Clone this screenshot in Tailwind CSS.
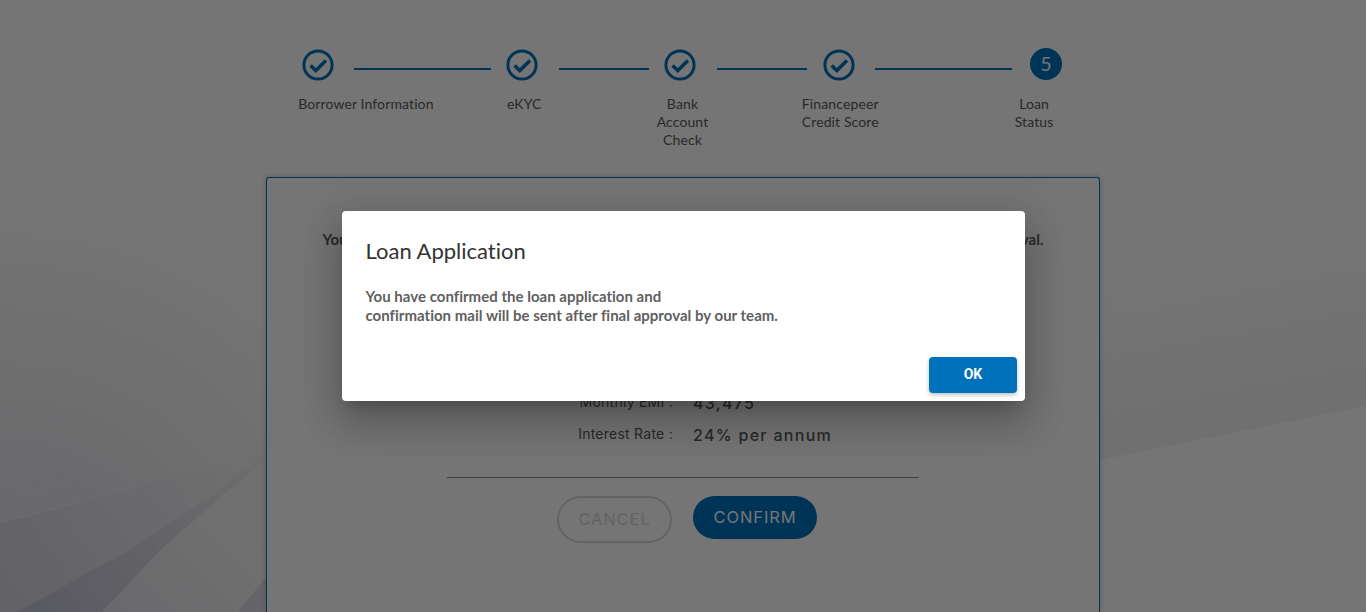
<!DOCTYPE html>
<html lang="en">
<head>
<meta charset="utf-8">
<title>Loan Status</title>
<script src="https://cdn.jsdelivr.net/npm/@tailwindcss/browser@4"></script>
</head>
<body class="relative h-[612px] w-[1366px] overflow-hidden bg-white font-['Lato',sans-serif] text-[#5a5a5a] [font-variant-ligatures:none]">
<svg class="absolute inset-0" width="1366" height="612" viewBox="0 0 1366 612" aria-hidden="true">
  <defs>
    <radialGradient id="haze" gradientUnits="userSpaceOnUse" cx="0" cy="640" r="440">
      <stop offset="0" stop-color="#dcd9e2"/><stop offset=".4" stop-color="#e8e6eb"/><stop offset=".6" stop-color="#f1f0f2"/><stop offset=".85" stop-color="#f9f9f9"/><stop offset="1" stop-color="#fff"/>
    </radialGradient>
    <linearGradient id="plane" gradientUnits="userSpaceOnUse" x1="0" y1="612" x2="220" y2="450"><stop offset="0" stop-color="#d6d4df"/><stop offset=".6" stop-color="#e5e3e9"/><stop offset="1" stop-color="#f1f1f2"/></linearGradient>
    <linearGradient id="ray" gradientUnits="userSpaceOnUse" x1="50" y1="612" x2="266" y2="450"><stop offset="0" stop-color="#c5c5d6"/><stop offset=".5" stop-color="#dad8e0"/><stop offset="1" stop-color="#f1f1f2"/></linearGradient>
    <linearGradient id="low" gradientUnits="userSpaceOnUse" x1="130" y1="612" x2="240" y2="500"><stop offset="0" stop-color="#e8e7ec"/><stop offset="1" stop-color="#f5f5f5"/></linearGradient>
    <linearGradient id="right" gradientUnits="userSpaceOnUse" x1="1200" y1="250" x2="1235" y2="430"><stop offset="0" stop-color="#fff"/><stop offset="1" stop-color="#f3f3f4"/></linearGradient>
  </defs>
  <rect width="450" height="612" fill="url(#haze)"/>
  <g stroke="#f2f1f4" stroke-width="1" fill="none" opacity=".5">
    <path d="M0 440Q12 426 20 412M0 452Q24 430 38 410M0 464Q34 438 56 420M0 473Q44 448 76 430M0 482Q52 458 98 440M0 490Q60 468 120 450M0 500Q70 480 140 462"/>
  </g>
  <path d="M0 523L125 491L210 466L266 452V612H0Z" fill="url(#plane)"/>
  <path d="M0 522L30 515L90 500" stroke="#efedf1" stroke-width="1.2" fill="none"/>
  <path d="M102 612L160 550L217 500L266 460V612Z" fill="url(#low)"/>
  <path d="M17 612L133 548L210 497L266 453V460L217 500L160 550L102 612Z" fill="url(#ray)"/>
  <path d="M238 612L266 577V612Z" fill="#dcdbe3"/>
  <path d="M1100 200H1366V406L1100 460Z" fill="url(#right)"/>
</svg>

<main class="relative mx-auto h-full w-[834px]">
  <nav class="pt-12">
    <div class="flex h-[34px] items-center pl-9 text-[#0072bb]">
      <svg class="h-8 w-8" viewBox="0 0 32 32" fill="none" stroke="currentColor"><circle cx="16" cy="16" r="14.1" stroke-width="3"/><path d="M8.6 16.4l5.2 5.2L24 11.4" stroke-width="3.5"/></svg>
      <span class="mt-2 ml-5 h-0.5 w-[137px] bg-[#0072bb]"></span>
      <svg class="ml-[15px] h-8 w-8" viewBox="0 0 32 32" fill="none" stroke="currentColor"><circle cx="16" cy="16" r="14.1" stroke-width="3"/><path d="M8.6 16.4l5.2 5.2L24 11.4" stroke-width="3.5"/></svg>
      <span class="mt-2 ml-[21px] h-0.5 w-[90px] bg-[#0072bb]"></span>
      <svg class="ml-[15px] h-8 w-8" viewBox="0 0 32 32" fill="none" stroke="currentColor"><circle cx="16" cy="16" r="14.1" stroke-width="3"/><path d="M8.6 16.4l5.2 5.2L24 11.4" stroke-width="3.5"/></svg>
      <span class="mt-2 ml-[21px] h-0.5 w-[90px] bg-[#0072bb]"></span>
      <svg class="ml-4 h-8 w-8" viewBox="0 0 32 32" fill="none" stroke="currentColor"><circle cx="16" cy="16" r="14.1" stroke-width="3"/><path d="M8.6 16.4l5.2 5.2L24 11.4" stroke-width="3.5"/></svg>
      <span class="mt-2 ml-5 h-0.5 w-[137px] bg-[#0072bb]"></span>
      <span class="mb-0.5 ml-[18px] flex h-8 w-8 items-center justify-center rounded-full bg-[#0072bb] text-[19px] text-white">5</span>
    </div>
    <div class="mt-[13px] flex h-[83px] pl-[20px] text-center text-sm leading-[18px] tracking-[0.12px]">
      <span class="w-40">Borrower Information</span>
      <span class="w-[157px]">eKYC</span>
      <span class="w-40">Bank<br>Account<br>Check</span>
      <span class="w-[156px]">Financepeer<br>Credit Score</span>
      <span class="ml-[50px] w-[132px]">Loan<br>Status</span>
    </div>
  </nav>
  <section class="-mt-px flex h-[435px] flex-col items-center rounded-t-[3px] border border-b-0 border-[#0072bb] bg-white shadow-[0_0_6px_rgba(0,0,0,0.2)]">
    <p class="mt-[50px] flex h-[22px] w-[721px] shrink-0 justify-between text-[15px] leading-[22px] font-bold whitespace-nowrap"><span>You</span><span>approval.</span></p>
    <dl class="mt-[138px] grid w-full grid-cols-[406px_1fr] gap-x-[20px] font-['Inter',sans-serif]">
      <dt class="h-8 text-right text-sm leading-7 tracking-[0.25px]">Monthly EMI :</dt><dd class="h-8 text-base leading-[30px] font-medium tracking-[1.3px]">43,475</dd>
      <dt class="h-8 text-right text-sm leading-7 tracking-[0.25px]">Interest Rate :</dt><dd class="h-8 text-base leading-[30px] font-medium tracking-[1.3px]">24% per annum</dd>
    </dl>
    <div class="mt-[25px] h-px w-[472px] shrink-0 bg-[#8c8c8c]"></div>
    <div class="mt-[18px] flex items-start gap-[21px] pl-2 font-['Inter',sans-serif] text-[16.5px] tracking-[0.9px]">
      <button class="h-[47px] w-[115px] rounded-full border-2 border-[#d7d7d7] text-[#d7d7d7]">CANCEL</button>
      <button class="h-[43px] w-[124px] rounded-full bg-[#0072bb] text-white">CONFIRM</button>
    </div>
  </section>
</main>

<div class="absolute inset-0 flex items-start justify-center bg-black/54 pt-[211px] pl-px">
  <div role="dialog" class="flex h-[190px] w-[683px] flex-col rounded bg-white shadow-[0_11px_15px_-7px_rgba(0,0,0,0.2),0_24px_38px_3px_rgba(0,0,0,0.14),0_9px_46px_8px_rgba(0,0,0,0.12)]">
    <h2 class="mt-6 px-[23.5px] text-[22px] leading-8 text-[#333]">Loan Application</h2>
    <p class="mt-5 px-[23.5px] text-[15px] leading-[19px] font-bold tracking-[0.02px] text-[#5f5f5f]">You have confirmed the loan application and<br>confirmation mail will be sent after final approval by our team.</p>
    <button class="mt-auto mr-2 mb-2 h-9 w-[88px] self-end rounded bg-[#0072bb] pb-0.5 font-['Roboto',sans-serif] text-sm font-bold text-white shadow-[0_2px_4px_rgba(0,0,0,0.25)]">OK</button>
  </div>
</div>
</body>
</html>
